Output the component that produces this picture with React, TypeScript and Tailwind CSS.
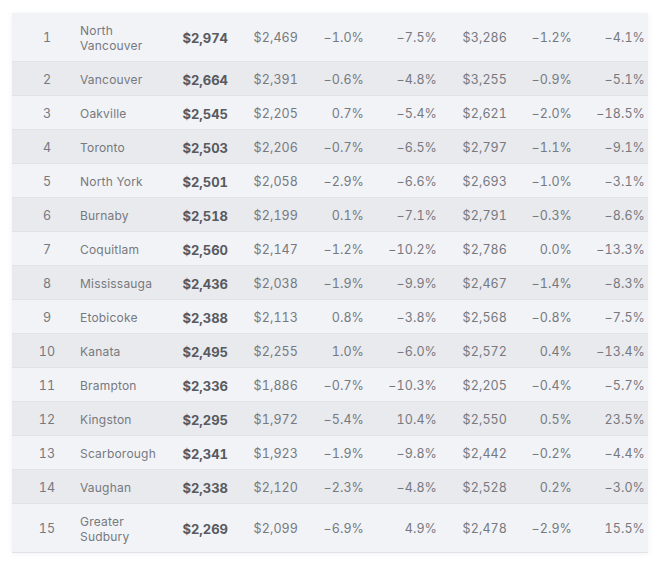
import React from "react";

const rows: [string, string, string, string, string, string, string, string, string][] = [
  ["1", "North Vancouver", "$2,974", "$2,469", "−1.0%", "−7.5%", "$3,286", "−1.2%", "−4.1%"],
  ["2", "Vancouver", "$2,664", "$2,391", "−0.6%", "−4.8%", "$3,255", "−0.9%", "−5.1%"],
  ["3", "Oakville", "$2,545", "$2,205", "0.7%", "−5.4%", "$2,621", "−2.0%", "−18.5%"],
  ["4", "Toronto", "$2,503", "$2,206", "−0.7%", "−6.5%", "$2,797", "−1.1%", "−9.1%"],
  ["5", "North York", "$2,501", "$2,058", "−2.9%", "−6.6%", "$2,693", "−1.0%", "−3.1%"],
  ["6", "Burnaby", "$2,518", "$2,199", "0.1%", "−7.1%", "$2,791", "−0.3%", "−8.6%"],
  ["7", "Coquitlam", "$2,560", "$2,147", "−1.2%", "−10.2%", "$2,786", "0.0%", "−13.3%"],
  ["8", "Mississauga", "$2,436", "$2,038", "−1.9%", "−9.9%", "$2,467", "−1.4%", "−8.3%"],
  ["9", "Etobicoke", "$2,388", "$2,113", "0.8%", "−3.8%", "$2,568", "−0.8%", "−7.5%"],
  ["10", "Kanata", "$2,495", "$2,255", "1.0%", "−6.0%", "$2,572", "0.4%", "−13.4%"],
  ["11", "Brampton", "$2,336", "$1,886", "−0.7%", "−10.3%", "$2,205", "−0.4%", "−5.7%"],
  ["12", "Kingston", "$2,295", "$1,972", "−5.4%", "10.4%", "$2,550", "0.5%", "23.5%"],
  ["13", "Scarborough", "$2,341", "$1,923", "−1.9%", "−9.8%", "$2,442", "−0.2%", "−4.4%"],
  ["14", "Vaughan", "$2,338", "$2,120", "−2.3%", "−4.8%", "$2,528", "0.2%", "−3.0%"],
  ["15", "Greater Sudbury", "$2,269", "$2,099", "−6.9%", "4.9%", "$2,478", "−2.9%", "15.5%"],
];

export default function App() {
  return (
    <div
      className="w-[660px] h-[566px] bg-white pt-[13px] pl-[12px]"
      style={{ fontFamily: "Inter, 'Noto Sans', sans-serif" }}
    >
      <div className="w-[636px] shadow-[0_1px_6px_rgba(0,0,0,0.06)]">
        {rows.map((r, i) => (
          <div
            key={r[0]}
            className={`grid grid-cols-[68px_90px_58px_70px_66px_73px_70px_65px_73px] items-center pt-[9.5px] pb-[7.5px] text-[12.5px] leading-[16px] tracking-[0.1px] tabular-nums text-[#76797f] border-b border-[#e2e3e8] ${
              i % 2 === 0 ? "bg-[#f2f3f7]" : "bg-[#e9eaee]"
            }`}
          >
            <div className="text-center pl-[2px]">{r[0]}</div>
            <div className="pr-2 text-[12px] tracking-[0.2px] leading-[15.5px]">{r[1]}</div>
            <div className="text-right font-bold text-[13px] tracking-[0px] text-[#575a60]">{r[2]}</div>
            <div className="text-right">{r[3]}</div>
            <div className="text-right">{r[4]}</div>
            <div className="text-right">{r[5]}</div>
            <div className="text-right">{r[6]}</div>
            <div className="text-right">{r[7]}</div>
            <div className="text-right">{r[8]}</div>
          </div>
        ))}
      </div>
    </div>
  );
}
